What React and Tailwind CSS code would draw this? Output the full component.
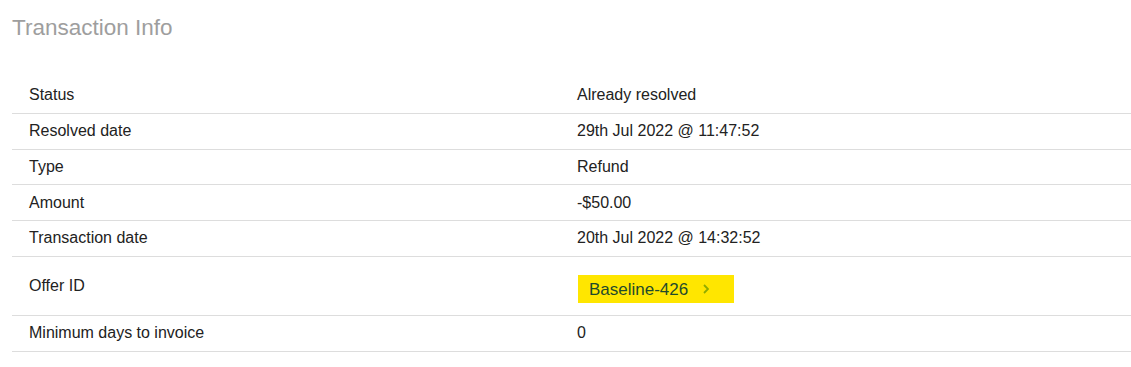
export default function App() {
  const rows = [
    ["Status", "Already resolved"],
    ["Resolved date", "29th Jul 2022 @ 11:47:52"],
    ["Type", "Refund"],
    ["Amount", "-$50.00"],
    ["Transaction date", "20th Jul 2022 @ 14:32:52"],
    ["Offer ID", "offer"],
    ["Minimum days to invoice", "0"],
  ];
  return (
    <div className="bg-white w-[1131px] h-[367px] font-['Liberation_Sans',Arial,sans-serif]">
      <div className="pl-[12px] pt-[15px] text-[22.5px] leading-[26px] text-[#9e9e9e]">
        Transaction Info
      </div>
      <div className="ml-[12px] mt-[37px]">
        {rows.map(([label, value]) => (
          <div
            key={label}
            className={
              "flex items-center border-b border-[#dddddd] text-[16px] text-[#222222] " +
              (value === "offer" ? "h-[59px]" : "h-[35.75px]")
            }
          >
            <div className="w-[549px] pl-[17px]">{label}</div>
            <div className="pl-[16px]">
              {value === "offer" ? (
                <div className="flex items-center h-[28px] w-[156px] bg-[#ffe600] pl-[11px] text-[17px] text-[#1f4a2c] ml-[1px] mt-[7px]">
                  <span>Baseline-426</span>
                  <svg className="ml-[15px]" width="6" height="10" viewBox="0 0 6 10">
                    <path d="M1 1 L5 5 L1 9" fill="none" stroke="#8fab00" strokeWidth="1.8" />
                  </svg>
                </div>
              ) : (
                value
              )}
            </div>
          </div>
        ))}
      </div>
    </div>
  );
}
